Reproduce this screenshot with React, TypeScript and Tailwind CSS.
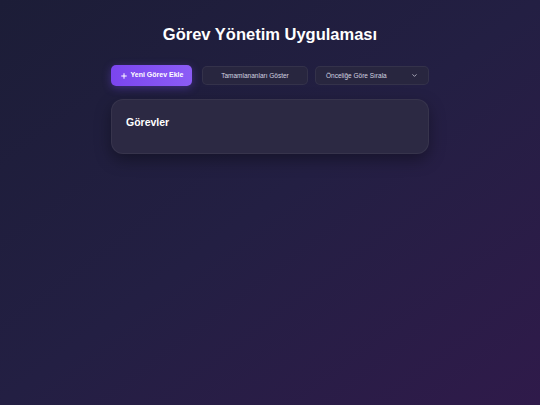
import React from 'react';
import { ChevronDown, Plus } from 'lucide-react';

const App: React.FC = () => {
  return (
    <div
      className="min-h-[405px] w-full bg-gradient-to-br from-[#1c1d37] via-[#231f43] to-[#2f1a4a] text-white"
      style={{ fontFamily: '"Liberation Sans", Arial, sans-serif' }}
    >
      <div className="mx-auto w-[318px] pt-[24px]">
        {/* Header */}
        <h1 className="text-center text-[16.5px] font-bold leading-[20px] text-white">Görev Yönetim Uygulaması</h1>

        {/* Controls */}
        <div className="mt-[21px] flex items-center">
          <button className="flex h-[21px] w-[81px] items-center justify-center gap-[3px] rounded-[5px] bg-gradient-to-r from-[#7b45ef] to-[#8b5cf6] text-[7px] font-bold text-white shadow-[0_2px_8px_rgba(124,77,255,0.35)]">
            <Plus className="h-[8px] w-[8px]" strokeWidth={3} />
            Yeni Görev Ekle
          </button>
          <button className="ml-[10px] flex h-[19px] w-[106px] items-center justify-center rounded-[5px] border border-white/[0.06] bg-[#28263f] text-[6.5px] text-[#d4d3e0]">
            Tamamlananları Göster
          </button>
          <div className="ml-[7px] flex h-[19px] w-[114px] items-center justify-between rounded-[5px] border border-white/[0.06] bg-[#28263f] pl-[10px] pr-[10px] text-[6.5px] text-[#d4d3e0]">
            <span>Önceliğe Göre Sırala</span>
            <ChevronDown className="h-[7px] w-[7px]" strokeWidth={2.5} />
          </div>
        </div>

        {/* Task list */}
        <div className="mt-[13px] h-[55px] rounded-[12px] border border-white/5 bg-[#2c2943] px-[14px] pt-[15px] shadow-[0_6px_16px_rgba(0,0,0,0.35)]">
          <h2 className="text-[10.5px] font-bold leading-[14px] text-white">Görevler</h2>
        </div>
      </div>
    </div>
  );
};

export default App;
